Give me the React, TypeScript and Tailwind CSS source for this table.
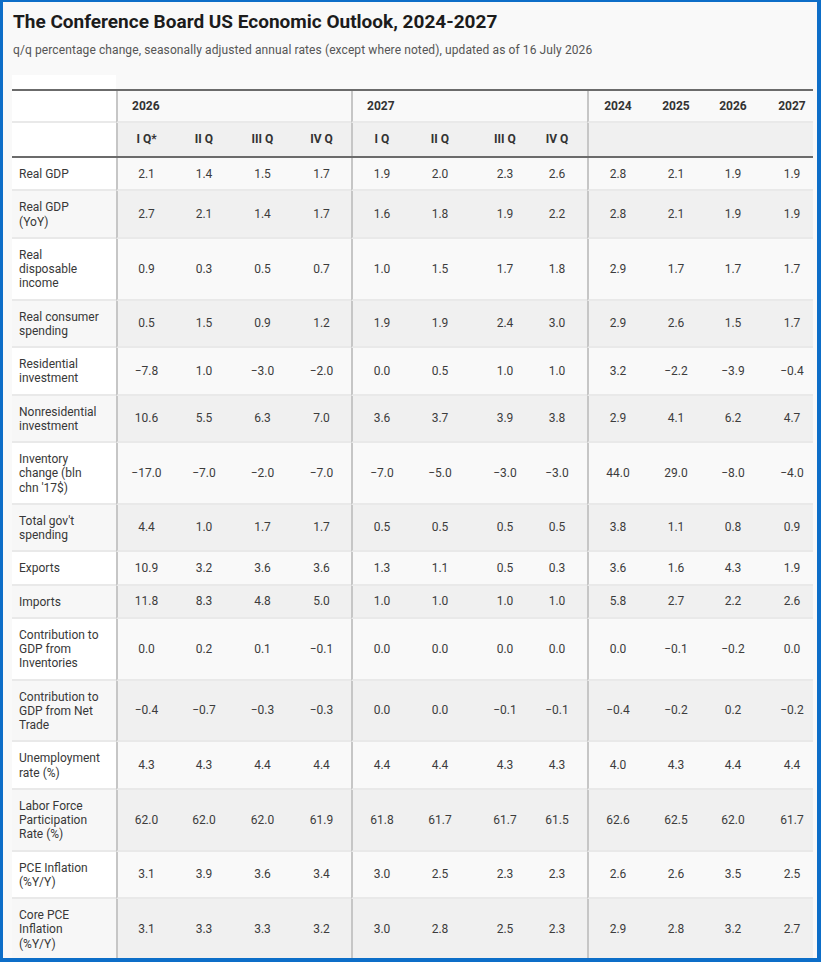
import React from 'react'

type Row = { label: string[]; values: string[] }

const rows: Row[] = [
  { label: ['Real GDP'], values: ['2.1', '1.4', '1.5', '1.7', '1.9', '2.0', '2.3', '2.6', '2.8', '2.1', '1.9', '1.9'] },
  { label: ['Real GDP', '(YoY)'], values: ['2.7', '2.1', '1.4', '1.7', '1.6', '1.8', '1.9', '2.2', '2.8', '2.1', '1.9', '1.9'] },
  { label: ['Real', 'disposable', 'income'], values: ['0.9', '0.3', '0.5', '0.7', '1.0', '1.5', '1.7', '1.8', '2.9', '1.7', '1.7', '1.7'] },
  { label: ['Real consumer', 'spending'], values: ['0.5', '1.5', '0.9', '1.2', '1.9', '1.9', '2.4', '3.0', '2.9', '2.6', '1.5', '1.7'] },
  { label: ['Residential', 'investment'], values: ['−7.8', '1.0', '−3.0', '−2.0', '0.0', '0.5', '1.0', '1.0', '3.2', '−2.2', '−3.9', '−0.4'] },
  { label: ['Nonresidential', 'investment'], values: ['10.6', '5.5', '6.3', '7.0', '3.6', '3.7', '3.9', '3.8', '2.9', '4.1', '6.2', '4.7'] },
  { label: ['Inventory', 'change (bln', "chn '17$)"], values: ['−17.0', '−7.0', '−2.0', '−7.0', '−7.0', '−5.0', '−3.0', '−3.0', '44.0', '29.0', '−8.0', '−4.0'] },
  { label: ["Total gov't", 'spending'], values: ['4.4', '1.0', '1.7', '1.7', '0.5', '0.5', '0.5', '0.5', '3.8', '1.1', '0.8', '0.9'] },
  { label: ['Exports'], values: ['10.9', '3.2', '3.6', '3.6', '1.3', '1.1', '0.5', '0.3', '3.6', '1.6', '4.3', '1.9'] },
  { label: ['Imports'], values: ['11.8', '8.3', '4.8', '5.0', '1.0', '1.0', '1.0', '1.0', '5.8', '2.7', '2.2', '2.6'] },
  { label: ['Contribution to', 'GDP from', 'Inventories'], values: ['0.0', '0.2', '0.1', '−0.1', '0.0', '0.0', '0.0', '0.0', '0.0', '−0.1', '−0.2', '0.0'] },
  { label: ['Contribution to', 'GDP from Net', 'Trade'], values: ['−0.4', '−0.7', '−0.3', '−0.3', '0.0', '0.0', '−0.1', '−0.1', '−0.4', '−0.2', '0.2', '−0.2'] },
  { label: ['Unemployment', 'rate (%)'], values: ['4.3', '4.3', '4.4', '4.4', '4.4', '4.4', '4.3', '4.3', '4.0', '4.3', '4.4', '4.4'] },
  { label: ['Labor Force', 'Participation', 'Rate (%)'], values: ['62.0', '62.0', '62.0', '61.9', '61.8', '61.7', '61.7', '61.5', '62.6', '62.5', '62.0', '61.7'] },
  { label: ['PCE Inflation', '(%Y/Y)'], values: ['3.1', '3.9', '3.6', '3.4', '3.0', '2.5', '2.3', '2.3', '2.6', '2.6', '3.5', '2.5'] },
  { label: ['Core PCE', 'Inflation', '(%Y/Y)'], values: ['3.1', '3.3', '3.3', '3.2', '3.0', '2.8', '2.5', '2.3', '2.9', '2.8', '3.2', '2.7'] },
]

const quarters = ['I Q*', 'II Q', 'III Q', 'IV Q', 'I Q', 'II Q', 'III Q', 'IV Q']
const years = ['2024', '2025', '2026', '2027']

// column widths tuned so the centred numbers sit where the original ones do
const gridCols =
  'grid grid-cols-[104px_59px_58px_59px_59px_60px_58px_72px_46px_60px_58px_56px_52px]'

// extra per-column classes: group separators and small centring nudges
const colExtra = [
  'border-l-2 border-l-[#c6c6c6]',
  '',
  '',
  '',
  'border-l-2 border-l-[#c6c6c6]',
  '',
  '',
  'pr-[14px]',
  'border-l-2 border-l-[#c6c6c6]',
  '',
  '',
  'pl-[10px]',
]

function DataRow({ row, shaded }: { row: Row; shaded: boolean }) {
  return (
    <div className={gridCols}>
      <div
        className={`flex flex-col justify-center border-b-2 border-[#e9e9e9] pl-[7px] pt-[9px] pb-[8px] text-[#383838] ${
          shaded ? 'bg-[#f7f7f7]' : 'bg-white'
        }`}
      >
        {row.label.map((l, i) => (
          <span key={i} className="whitespace-nowrap">
            {l}
          </span>
        ))}
      </div>
      {row.values.map((v, i) => (
        <div
          key={i}
          className={`flex items-center justify-center border-b-2 border-[#e9e9e9] text-[#3c3c3c] ${colExtra[i]} ${
            shaded ? 'bg-[#f0f0f0]' : 'bg-[#f9f9f9]'
          }`}
        >
          {v}
        </div>
      ))}
    </div>
  )
}

export default function App() {
  return (
    <div
      className="h-[962px] w-[821px] overflow-hidden border-t-2 border-r-4 border-b-4 border-l-[3px] border-[#0d6ec8] bg-[#f9f9f9] pt-[9px] pl-[9px]"
      style={{ fontFamily: 'Roboto, "Liberation Sans", sans-serif' }}
    >
      <h1 className="ml-[1px] text-[19px] leading-[22px] font-bold text-[#1c1c1c]">
        The Conference Board US Economic Outlook, 2024-2027
      </h1>
      <p className="mt-[10px] ml-[1px] text-[12px] leading-[14px] tracking-[0.1px] text-[#555]">
        q/q percentage change, seasonally adjusted annual rates (except where noted), updated as of 16 July 2026
      </p>
      <div className="mt-[18px] h-[14px] w-[104px] bg-white" />

      <div className="w-[801px] border-t-2 border-[#6b6b6b] text-[12px] leading-[14.25px]">
        {/* year header */}
        <div className={`${gridCols} h-[32px] font-bold text-[#333]`}>
          <div className="border-b-2 border-[#e9e9e9] bg-white" />
          <div className="col-span-4 flex items-center border-b-2 border-l-2 border-[#e9e9e9] border-l-[#c6c6c6] pl-[14px]">
            2026
          </div>
          <div className="col-span-4 flex items-center border-b-2 border-l-2 border-[#e9e9e9] border-l-[#c6c6c6] pl-[14px]">
            2027
          </div>
          {years.map((y, i) => (
            <div
              key={y}
              className={`flex items-center justify-center border-b-2 border-[#e9e9e9] ${
                i === 0 ? 'border-l-2 border-l-[#c6c6c6]' : ''
              } ${i === 3 ? 'pl-[10px]' : ''}`}
            >
              {y}
            </div>
          ))}
        </div>

        {/* quarter header */}
        <div className={`${gridCols} h-[35px] border-b-2 border-[#6b6b6b] font-bold text-[#333]`}>
          <div className="bg-white" />
          {quarters.map((q, i) => (
            <div
              key={i}
              className={`flex items-center justify-center bg-[#f0f0f0] ${colExtra[i]}`}
            >
              {q}
            </div>
          ))}
          <div className="col-span-4 border-l-2 border-l-[#c6c6c6] bg-[#f0f0f0]" />
        </div>

        {rows.map((r, i) => (
          <DataRow key={i} row={r} shaded={i % 2 === 1} />
        ))}
      </div>
    </div>
  )
}
